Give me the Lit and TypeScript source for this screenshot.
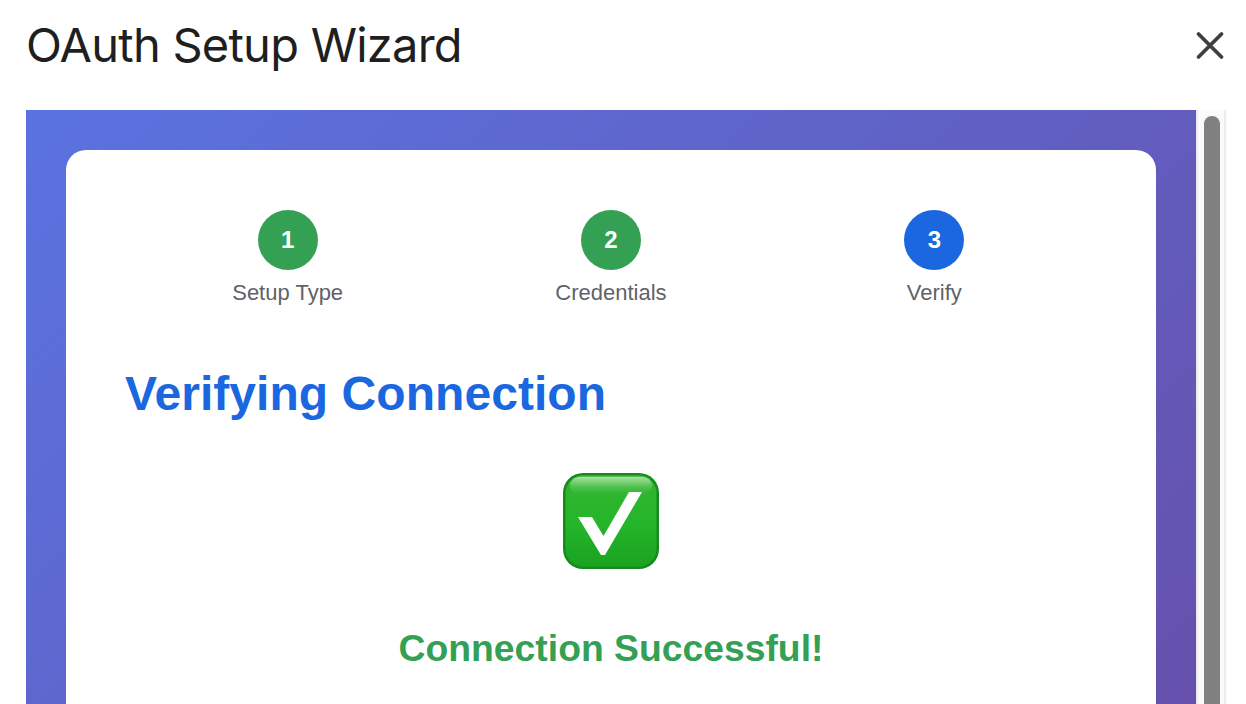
import { LitElement, html, css, svg } from "lit";
import { customElement } from "lit/decorators.js";

const steps = [
  { n: 1, label: "Setup Type", state: "done" },
  { n: 2, label: "Credentials", state: "done" },
  { n: 3, label: "Verify", state: "active" },
];

const checkIcon = svg`
  <defs>
    <linearGradient id="g" x1="0" y1="0" x2="0" y2="1">
      <stop offset="0" stop-color="#4fc04a"/>
      <stop offset="0.12" stop-color="#2fb52f"/>
      <stop offset="0.55" stop-color="#24b52a"/>
      <stop offset="1" stop-color="#1aa320"/>
    </linearGradient>
    <linearGradient id="s" x1="0" y1="0" x2="0" y2="1">
      <stop offset="0" stop-color="#b5e3ae" stop-opacity="0.9"/>
      <stop offset="1" stop-color="#5cc95a" stop-opacity="0"/>
    </linearGradient>
  </defs>
  <rect x="0" y="0" width="96" height="96" rx="20" fill="#178a1e"/>
  <rect x="2.5" y="2.5" width="91" height="91" rx="17.5" fill="url(#g)"/>
  <rect x="7" y="4" width="82" height="18" rx="9" fill="url(#s)"/>
  <path d="M15 44 L29 44 L40.5 63 L66 19 L79 19 L42 82 L38 82 Z" fill="#fff"/>
`;

@customElement("app-root")
export class AppRoot extends LitElement {
  static styles = css`
    :host {
      display: block;
      width: 1246px;
      height: 704px;
      overflow: hidden;
      background: #fff;
      font-family: "Liberation Sans", Arial, sans-serif;
    }
    .header {
      height: 110px;
      display: flex;
      align-items: flex-start;
      justify-content: space-between;
      padding: 0 21px 0 26px;
      box-sizing: border-box;
    }
    .title {
      margin: 16px 0 0;
      font-family: Inter, "Noto Sans", sans-serif;
      font-weight: 400;
      font-size: 47px;
      line-height: 58px;
      letter-spacing: -0.75px;
      color: #1f1f1f;
    }
    .close {
      margin-top: 30px;
      width: 30px;
      height: 30px;
      display: block;
    }
    .body {
      display: flex;
      padding: 0 20px 0 26px;
      height: 594px;
    }
    .frame {
      flex: 1;
      height: 1100px;
      padding: 40px;
      box-sizing: border-box;
      background: linear-gradient(135deg, #5a73e0 0%, #69479e 100%);
    }
    .card {
      background: #fff;
      border-radius: 20px;
      padding: 60px;
      height: 1000px;
      box-sizing: border-box;
    }
    .steps {
      display: grid;
      grid-template-columns: repeat(3, 1fr);
      margin-bottom: 60px;
    }
    .step {
      display: flex;
      flex-direction: column;
      align-items: center;
      gap: 10px;
    }
    .dot {
      width: 60px;
      height: 60px;
      border-radius: 50%;
      display: flex;
      align-items: center;
      justify-content: center;
      color: #fff;
      font-weight: 700;
      font-size: 24px;
    }
    .dot.done { background: #34a053; }
    .dot.active { background: #1a67e0; }
    .label {
      font-size: 22px;
      line-height: 26px;
      color: #5f6368;
    }
    .heading {
      margin: 0 0 51px -1px;
      font-size: 48px;
      line-height: 56px;
      font-weight: 700;
      letter-spacing: 0.05px;
      color: #1a67e0;
    }
    .result {
      display: flex;
      flex-direction: column;
      align-items: center;
    }
    .emoji { width: 96px; height: 96px; display: block; margin-bottom: 58px; }
    .success {
      margin: 0;
      font-size: 37.3px;
      line-height: 42px;
      font-weight: 700;
      color: #34a053;
    }
    .scrollbar {
      width: 30px;
      height: 100%;
      box-sizing: border-box;
      background: #fafafa;
      border-left: 2px solid #ececec;
      border-right: 2px solid #ececec;
      padding: 6px 4px 0 6px;
      flex: none;
    }
    .thumb {
      width: 16px;
      height: 900px;
      border-radius: 8px;
      background: #808080;
    }
  `;

  render() {
    return html`
      <div class="header">
        <h1 class="title">OAuth Setup Wizard</h1>
        <svg class="close" viewBox="0 0 30 30" aria-label="Close">
          <path d="M3.5 4 L26.5 27 M26.5 4 L3.5 27" stroke="#3c4043" stroke-width="3.8" stroke-linecap="round" fill="none"/>
        </svg>
      </div>
      <div class="body">
        <div class="frame">
          <div class="card">
            <div class="steps">
              ${steps.map(
                (s) => html`
                  <div class="step">
                    <div class="dot ${s.state}">${s.n}</div>
                    <div class="label">${s.label}</div>
                  </div>
                `
              )}
            </div>
            <h2 class="heading">Verifying Connection</h2>
            <div class="result">
              <svg class="emoji" viewBox="0 0 96 96" role="img" aria-label="Check mark">${checkIcon}</svg>
              <h3 class="success">Connection Successful!</h3>
            </div>
          </div>
        </div>
        <div class="scrollbar"><div class="thumb"></div></div>
      </div>
    `;
  }
}
